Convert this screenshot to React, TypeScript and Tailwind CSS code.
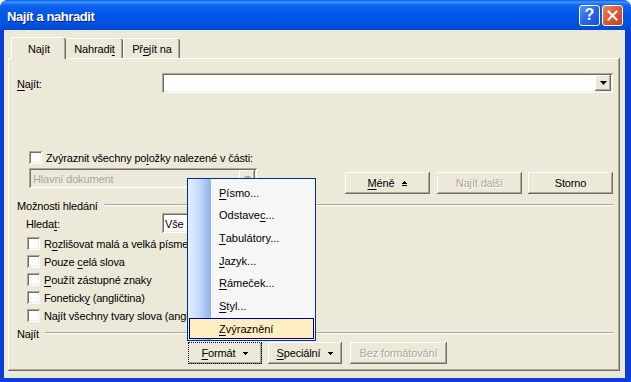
import React from "react";

const raised =
  "shadow-[inset_-1px_-1px_0_#716F64,inset_1px_1px_0_#FFFFFF,inset_-2px_-2px_0_#ACA899]";
const sunken =
  "shadow-[inset_1px_1px_0_#ACA899,inset_-1px_-1px_0_#FFFFFF,inset_2px_2px_0_#716F64,inset_-2px_-2px_0_#F1EFE2]";

function U({ children }: { children: React.ReactNode }) {
  return <span className="underline decoration-1 underline-offset-[2px]">{children}</span>;
}

function Arrow({ color = "#000000" }: { color?: string }) {
  return (
    <svg width="7" height="4" viewBox="0 0 7 4">
      <polygon points="0,0 7,0 3.5,4" fill={color} />
    </svg>
  );
}

function SmallArrow() {
  return (
    <svg width="5" height="3" viewBox="0 0 5 3" shapeRendering="crispEdges">
      <rect x="0" y="0" width="5" height="1" fill="#000000" />
      <rect x="1" y="1" width="3" height="1" fill="#000000" />
      <rect x="2" y="2" width="1" height="1" fill="#000000" />
    </svg>
  );
}

function ComboArrow({ disabled = false }: { disabled?: boolean }) {
  return (
    <div className={`w-[16px] h-[16px] bg-[#ECE9D8] flex items-center justify-center ${raised}`}>
      <Arrow color={disabled ? "#ACA899" : "#000000"} />
    </div>
  );
}

function Check({ children }: { children: React.ReactNode }) {
  return (
    <div className="h-[18px] flex items-center ml-[19px]">
      <div className={`w-[13px] h-[13px] bg-white ${sunken}`} />
      <span className="ml-[4px] pt-[2px]">{children}</span>
    </div>
  );
}

function Btn({
  children,
  w,
  disabled = false,
  extra = "",
}: {
  children: React.ReactNode;
  w: string;
  disabled?: boolean;
  extra?: string;
}) {
  return (
    <div
      className={`${w} h-[22px] flex items-center justify-center pt-[1px] bg-[#ECE9D8] ${raised} ${
        disabled ? "text-[#ACA899] [text-shadow:1px_1px_0_#FFFFFF]" : "text-black"
      } ${extra}`}
    >
      {children}
    </div>
  );
}

function Separator({ label, ml }: { label: string; ml: string }) {
  return (
    <div className={`h-[14px] flex items-center ${ml} mr-[7px]`}>
      <span className="pt-[2px]">{label}</span>
      <div className="flex-1 ml-[6px] h-[2px] border-t border-t-[#ACA899] border-b border-b-white" />
    </div>
  );
}

export default function App() {
  const menuItems: [React.ReactNode, string][] = [
    [<><U>P</U>ísmo...</>, "h-[22px]"],
    [<>Odstave<U>c</U>...</>, "h-[23px]"],
    [<><U>T</U>abulátory...</>, "h-[23px]"],
    [<><U>J</U>azyk...</>, "h-[22px]"],
    [<><U>R</U>ámeček...</>, "h-[23px]"],
    [<><U>S</U>tyl...</>, "h-[23px]"],
  ];

  return (
    <div className="w-[631px] h-[382px] bg-white relative overflow-hidden font-['Liberation_Sans',Arial,sans-serif] text-[11px] leading-none text-black">
      <div className="w-full h-full rounded-t-[8px] bg-[#0A3FD6] flex flex-col">
        {/* Title bar */}
        <div className="h-[30px] rounded-t-[8px] flex items-center pl-[7px] pr-[8px] bg-[linear-gradient(to_bottom,#0A5CE8_0%,#3D95FF_7%,#0D64EE_17%,#0058E8_45%,#0054E3_75%,#0048D2_100%)]">
          <span className="text-white font-bold text-[13px] tracking-[-0.4px] pt-[2px] [text-shadow:1px_1px_0_#0A1E8C]">
            Najít a nahradit
          </span>
          <div className="ml-auto flex gap-[2px]">
            <div className="w-[21px] h-[21px] rounded-[3px] border border-white bg-[linear-gradient(135deg,#5C92F6_0%,#2A66E8_50%,#1C4ED4_100%)] flex items-center justify-center text-white font-bold text-[16px]">
              ?
            </div>
            <div className="w-[21px] h-[21px] rounded-[3px] border border-white bg-[linear-gradient(135deg,#E98A6F_0%,#E05A36_45%,#C8401E_100%)] flex items-center justify-center">
              <svg width="11" height="11" viewBox="0 0 11 11">
                <path d="M1.5 1.5 L9.5 9.5 M9.5 1.5 L1.5 9.5" stroke="#FFFFFF" strokeWidth="2" strokeLinecap="square" />
              </svg>
            </div>
          </div>
        </div>

        {/* Body */}
        <div className="flex-1 ml-[4px] mr-[6px] mb-[4px] bg-[#ECE9D8] flex flex-col pt-[7px] pb-[7px] tracking-[-0.15px]">
          {/* Tabs */}
          <div className="flex items-end pl-[7px] h-[22px] relative z-10 -mb-[1px]">
            <div className="w-[55px] h-[22px] bg-[#ECE9D8] rounded-t-[2px] border-t border-l border-white shadow-[inset_-1px_0_0_#716F64,inset_-2px_0_0_#ACA899] flex items-center justify-center pt-[1px]">
              Na<U>j</U>ít
            </div>
            <div className="w-[57px] h-[20px] mb-[1px] bg-[#ECE9D8] rounded-t-[2px] border-t border-white shadow-[inset_-1px_0_0_#716F64,inset_-2px_0_0_#ACA899] flex items-center justify-center pt-[2px]">
              Nahradi<U>t</U>
            </div>
            <div className="w-[57px] h-[20px] mb-[1px] bg-[#ECE9D8] rounded-t-[2px] border-t border-l border-white shadow-[inset_-1px_0_0_#716F64,inset_-2px_0_0_#ACA899] flex items-center justify-center pt-[2px]">
              Př<U>e</U>jít na
            </div>
          </div>

          {/* Panel */}
          <div className={`flex-1 ml-[4px] mr-[5px] flex flex-col pt-[15px] ${raised}`}>
            {/* Row 1 */}
            <div className="h-[20px] flex items-center">
              <span className="ml-[9px] w-[145px] pt-[2px]">
                <U>N</U>ajít:
              </span>
              <div className={`w-[451px] h-[20px] bg-white flex items-center justify-end pr-[2px] ${sunken}`}>
                <ComboArrow />
              </div>
            </div>

            {/* Highlight checkbox */}
            <div className="mt-[58px] h-[13px] flex items-center ml-[21px]">
              <div className={`w-[13px] h-[13px] bg-white ${sunken}`} />
              <span className="ml-[4px] pt-[2px]">
                Zvýraznit všechny po<U>l</U>ožky nalezené v části:
              </span>
            </div>

            {/* Row 3 */}
            <div className="mt-[4px] flex items-start">
              <div className={`ml-[21px] w-[228px] h-[20px] bg-[#ECE9D8] flex items-center pl-[4px] pr-[2px] ${sunken}`}>
                <span className="text-[#ACA899] flex-1 pt-[2px]">Hlavní dokument</span>
                <ComboArrow disabled />
              </div>
              <div className="mt-[4px] ml-[88px] flex">
                <Btn w="w-[85px]">
                  <span>
                    <U>M</U>éně
                  </span>
                  <svg width="5" height="5" viewBox="0 0 5 5" className="ml-[8px]" shapeRendering="crispEdges">
                    <rect x="2" y="0" width="1" height="1" fill="#000000" />
                    <rect x="1" y="1" width="3" height="1" fill="#000000" />
                    <rect x="0" y="2" width="5" height="1" fill="#000000" />
                    <rect x="0" y="4" width="5" height="1" fill="#000000" />
                  </svg>
                </Btn>
                <Btn w="w-[85px]" disabled extra="ml-[7px]">
                  Najít další
                </Btn>
                <Btn w="w-[85px]" extra="ml-[6px]">
                  Storno
                </Btn>
              </div>
            </div>

            {/* Možnosti hledání */}
            <div className="mt-[4px]">
              <Separator label="Možnosti hledání" ml="ml-[9px]" />
            </div>

            {/* Hledat */}
            <div className="mt-[1px] h-[20px] flex items-center">
              <span className="ml-[18px] w-[136px] pt-[2px]">
                Hleda<U>t</U>:
              </span>
              <div className={`w-[150px] h-[20px] bg-white flex items-center pl-[3px] pt-[2px] ${sunken}`}>Vše</div>
            </div>

            <div className="mt-[1px] flex flex-col">
              <Check>
                R<U>o</U>zlišovat malá a velká písmena
              </Check>
              <Check>
                Pouze <U>c</U>elá slova
              </Check>
              <Check>
                <U>P</U>oužít zástupné znaky
              </Check>
              <Check>
                Fonetick<U>y</U> (angličtina)
              </Check>
              <Check>Najít všechny tvary slova (angličtina)</Check>
            </div>

            <div className="mt-[2px]">
              <Separator label="Najít" ml="ml-[9px]" />
            </div>

            <div className="mt-[2px] ml-[180px] flex">
              <Btn w="w-[74px]" extra="outline outline-1 outline-dotted outline-black -outline-offset-1">
                <span>
                  <U>F</U>ormát
                </span>
                <span className="ml-[8px] flex">
                  <SmallArrow />
                </span>
              </Btn>
              <Btn w="w-[74px]" extra="ml-[6px]">
                <span>
                  <U>S</U>peciální
                </span>
                <span className="ml-[8px] flex">
                  <SmallArrow />
                </span>
              </Btn>
              <Btn w="w-[97px]" disabled extra="ml-[8px]">
                Bez formátování
              </Btn>
            </div>
          </div>
        </div>
      </div>

      {/* Popup menu */}
      <div className="absolute left-[187px] top-[178px] w-[129px] h-[163px] border border-[#002D96] bg-[#F6F6F6] flex">
        <div className="absolute left-0 top-0 bottom-0 w-[23px] bg-[linear-gradient(to_right,#E3EFFF_0%,#C4DAFA_50%,#8DB2E8_100%)]" />
        <div className="relative flex flex-col w-full pt-[1px]">
          {menuItems.map(([label, h], i) => (
            <div key={i} className={`flex items-center pt-[4px] pl-[31px] ${h}`}>
              {label}
            </div>
          ))}
          <div className="mt-[2px] mx-[1px] h-[21px] border border-[#000080] bg-[#FFEEC2] pl-[29px] pt-[2px] flex items-center">
            <span>
              <U>Z</U>výraznění
            </span>
          </div>
        </div>
      </div>
    </div>
  );
}
